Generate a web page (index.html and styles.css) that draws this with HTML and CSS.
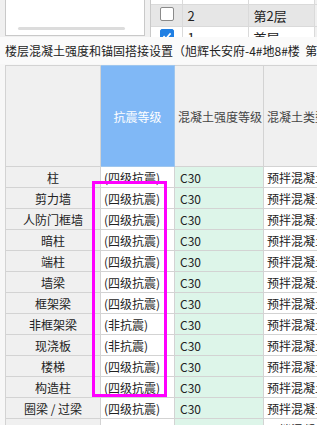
FILE: index.html
```html
<!DOCTYPE html>
<html lang="zh">
<head>
  <meta charset="UTF-8" />
  <title>楼层混凝土强度和锚固搭接设置</title>
  <link rel="stylesheet" href="styles.css">
</head>
<body>
  <div class="top">
    <div class="tree"><div class="thumb"></div></div>
    <div class="floors">
      <table class="floor-table">
        <colgroup>
          <col class="f-chk"><col class="f-no"><col class="f-name"><col class="f-rest">
        </colgroup>
        <tr><td class="chk"><span class="box"></span></td><td>3</td><td>第3层</td><td class="rest"></td></tr>
        <tr class="sel"><td class="chk"><span class="box"></span></td><td>2</td><td>第2层</td><td class="rest"></td></tr>
        <tr>
          <td class="chk">
            <span class="box on">
              <svg width="12" height="12" viewBox="0 0 12 12"><path d="M2.5 6.2 L5 8.6 L9.6 3.4" fill="none" stroke="#fff" stroke-width="1.6"/></svg>
            </span>
          </td>
          <td>1</td><td>首层</td><td class="rest"></td>
        </tr>
      </table>
    </div>
  </div>

  <div class="title">楼层混凝土强度和锚固搭接设置（旭辉长安府-4#地8#楼&nbsp; 第2层）</div>

  <div class="grid-wrap">
    <table class="grid">
      <colgroup>
        <col class="c-name"><col class="c-level"><col class="c-grade"><col class="c-type">
      </colgroup>
      <thead>
        <tr>
          <th class="name"></th>
          <th class="active">抗震等级</th>
          <th>混凝土强度等级</th>
          <th>混凝土类型</th>
        </tr>
      </thead>
      <tbody id="gridBody"></tbody>
    </table>
    <!-- 标记框 -->
    <div class="mark"></div>
  </div>

  <script>
    const rows = [
      ['柱', '(四级抗震)'],
      ['剪力墙', '(四级抗震)'],
      ['人防门框墙', '(四级抗震)'],
      ['暗柱', '(四级抗震)'],
      ['端柱', '(四级抗震)'],
      ['墙梁', '(四级抗震)'],
      ['框架梁', '(四级抗震)'],
      ['非框架梁', '(非抗震)'],
      ['现浇板', '(非抗震)'],
      ['楼梯', '(四级抗震)'],
      ['构造柱', '(四级抗震)'],
      ['圈梁 / 过梁', '(四级抗震)'],
      ['', '']
    ];

    const body = document.getElementById('gridBody');
    rows.forEach(r => {
      const tr = document.createElement('tr');
      tr.innerHTML = `
        <td class="name">${r[0]}</td>
        <td>${r[1]}</td>
        <td class="green">C30</td>
        <td>预拌混凝土</td>
      `;
      body.appendChild(tr);
    });
  </script>
</body>
</html>
```

FILE: styles.css
```css
html, body { margin: 0; height: 100%; overflow: hidden; }
body { font-family: "Noto Sans CJK SC", "Noto Sans", sans-serif; font-size: 12px; color: #333; background: #f7f7f7; }

.top { display: flex; gap: 5px; height: 37px; padding-left: 5px; background: #f0f0f0; overflow: hidden; }
.tree { width: 140px; height: 36px; box-sizing: border-box; background: #fff; border: 1px solid #c9c9c9; border-top: none; display: flex; flex-direction: column; justify-content: flex-end; }
.thumb { height: 3px; margin: 0 19px 5px 12px; border-radius: 2px; background: #dcdcdc; }

.floors { flex: 1; height: 37px; overflow: hidden; background: #fff; border-left: 1px solid #c9c9c9; }
.floor-table { border-collapse: collapse; table-layout: fixed; width: 170px; margin-top: -18px; font-size: 13px; color: #222; }
.f-chk { width: 31px; }
.f-no, .f-name { width: 66px; }
.f-rest { width: 7px; }
.floor-table td { box-sizing: border-box; height: 22px; padding: 0 0 0 5px; border-bottom: 1px solid #dadada; border-right: 1px solid #dadada; white-space: nowrap; overflow: hidden; }
.floor-table td.chk { padding: 0; }
.floor-table td.rest { padding: 0; border-right: none; background: #f0f0f0; }
.floor-table tr.sel td { background: #e6e6e6; }
.floor-table tr.sel td.rest { background: #f0f0f0; }
.box { display: block; width: 12px; height: 12px; margin: 0 0 0 9px; border: 1px solid #8a8a8a; border-radius: 2px; background: #fff; position: relative; top: -1px; }
.box.on { background: #1f7fe3; border-color: #1f7fe3; }
.box svg { display: block; }

.title { height: 27px; line-height: 28px; padding-left: 5px; white-space: nowrap; overflow: hidden; color: #222; background: #fafafa; }

.grid-wrap { position: relative; margin: 1px 0 0 5px; }
.grid { border-collapse: collapse; table-layout: fixed; width: 358px; }
.c-name { width: 95px; }
.c-level { width: 74px; }
.c-grade { width: 89px; }
.c-type { width: 100px; }
.grid th, .grid td { border: 1px solid #d3d3d3; padding: 0 0 0 3px; white-space: nowrap; overflow: hidden; font-weight: normal; text-align: left; }
.grid th { height: 100px; background: #f0f0f0; color: #444; }
.grid th.active { background: #80b8f6; color: #fff; text-align: center; padding: 0; border-color: #9ec6ee; }
.grid td { height: 20px; background: #fff; color: #222; }
.grid td.name, .grid th.name { background: #f0f0f0; text-align: center; padding: 0; }
.grid td.green { background: #ddf5e9; padding-left: 5px; }

.mark { position: absolute; left: 87px; top: 116px; width: 75px; height: 216px; box-sizing: border-box; border: 3px solid #f0f; }
```
